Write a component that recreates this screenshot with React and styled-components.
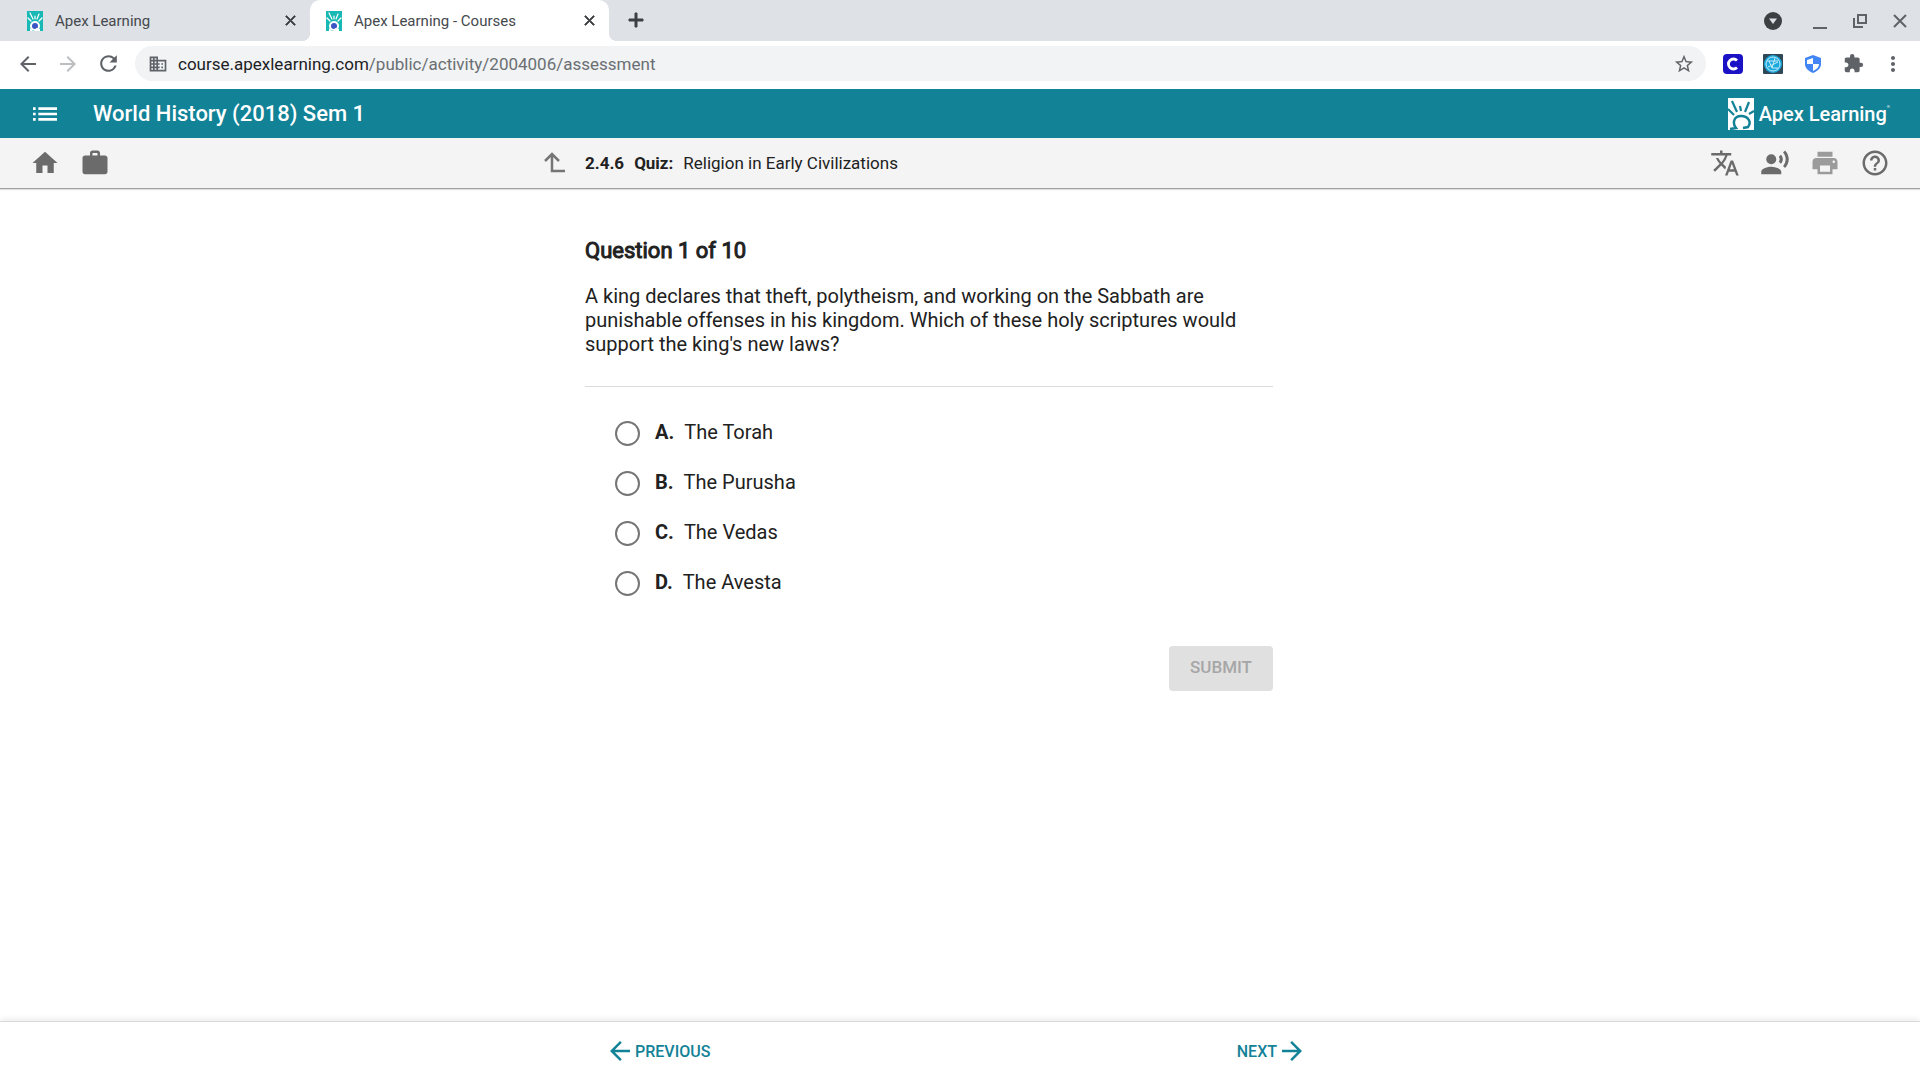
import React, { useState } from "react";
import styled, { createGlobalStyle } from "styled-components";
import {
  MdAdd,
  MdArrowBack,
  MdArrowForward,
  MdClose,
  MdDomain,
  MdExtension,
  MdHelpOutline,
  MdHome,
  MdList,
  MdMoreVert,
  MdPrint,
  MdRecordVoiceOver,
  MdRefresh,
  MdStarBorder,
  MdTranslate,
  MdWork,
} from "react-icons/md";

const GlobalStyle = createGlobalStyle`
  * {
    box-sizing: border-box;
    margin: 0;
    padding: 0;
  }

  body {
    font-family: Roboto, "Liberation Sans", sans-serif;
    color: #212121;
    background: #fff;
  }

  button {
    font: inherit;
    color: inherit;
    border: none;
    background: none;
    cursor: pointer;
  }

  a {
    color: inherit;
    text-decoration: none;
  }

  svg {
    display: block;
    flex-shrink: 0;
  }
`;

export const Page = styled.div`
  display: flex;
  flex-direction: column;
  min-height: 100vh;
`;

/* Browser window */

export const TabStrip = styled.div`
  display: flex;
  align-items: stretch;
  height: 41px;
  padding-left: 11px;
  background: #dee1e6;
`;

export const Tab = styled.div`
  position: relative;
  display: flex;
  align-items: center;
  width: 299px;
  padding: 0 11px 0 16px;
  border-radius: 10px 10px 0 0;
  background: ${(props) => (props.$active ? "#fff" : "transparent")};

  &::before,
  &::after {
    content: "";
    display: ${(props) => (props.$active ? "block" : "none")};
    position: absolute;
    bottom: 0;
    width: 8px;
    height: 8px;
  }

  &::before {
    left: -8px;
    background: radial-gradient(circle at 0 0, transparent 8px, #fff 8px);
  }

  &::after {
    right: -8px;
    background: radial-gradient(circle at 100% 0, transparent 8px, #fff 8px);
  }
`;

export const TabTitle = styled.span`
  flex: 1;
  margin-left: 12px;
  font-size: 15px;
  color: #45494d;
`;

export const ChromeButton = styled.button`
  display: flex;
  align-items: center;
  justify-content: center;
  width: ${(props) => props.$width || 40}px;
  height: 40px;
  color: ${(props) => props.$color || "#5f6368"};
`;

export const TabButton = styled(ChromeButton)`
  color: #3c4043;

  path:last-child {
    stroke: currentColor;
    stroke-width: 1px;
  }
`;

export const WindowControls = styled.div`
  display: flex;
  align-items: center;
  margin-left: auto;
`;

export const Toolbar = styled.div`
  display: flex;
  align-items: center;
  height: 48px;
  padding: 0 7px 3px 8px;
  background: #fff;
`;

export const AddressBar = styled.div`
  flex: 1;
  display: flex;
  align-items: center;
  height: 35px;
  margin: 0 7px;
  padding: 0 2px 0 13px;
  border-radius: 18px;
  background: #f1f3f4;
  color: #5f6368;
`;

export const Url = styled.a`
  flex: 1;
  margin-left: 10px;
  font-size: 17px;
  color: #6b6f73;

  span {
    color: #202124;
  }
`;

/* Course header */

export const CourseBar = styled.header`
  display: flex;
  align-items: center;
  height: 49px;
  padding: 0 30px 0 29px;
  background: #128297;
  color: #fff;
`;

export const CourseTitle = styled.h1`
  flex: 1;
  margin-left: 32px;
  font-size: 22px;
  font-weight: 500;
`;

export const Brand = styled.a`
  display: flex;
  align-items: center;
  font-size: 20px;
  font-weight: 500;

  svg {
    margin-right: 5px;
  }

  sup {
    align-self: flex-start;
    margin-top: 6px;
    font-size: 4px;
  }
`;

export const ActivityBar = styled.div`
  display: grid;
  grid-template-columns: 1fr 750px 1fr;
  align-items: center;
  height: 51px;
  border-bottom: 1px solid #a0a2a1;
  background: #f4f4f4;
  box-shadow: 0 1px 1px rgba(0, 0, 0, 0.12);
`;

export const IconGroup = styled.div`
  display: flex;
  align-items: center;
  justify-content: ${(props) => (props.$end ? "flex-end" : "flex-start")};
  gap: 20px;
  padding: 0 30px;
`;

export const IconButton = styled.button`
  display: flex;
  align-items: center;
  justify-content: center;
  color: ${(props) => (props.$faded ? "#9b9b9b" : "#6b6b6b")};
`;

export const LeftSide = styled.div`
  display: flex;
  align-items: center;
  justify-content: space-between;
  padding-right: 19px;
`;

export const ActivityTitle = styled.h2`
  display: flex;
  gap: 10px;
  font-size: 17px;
  font-weight: 400;
`;

/* Quiz */

export const Main = styled.main`
  flex: 1;
  width: 100%;
  max-width: 750px;
  margin: 0 auto;
  padding: 48px 62px 48px 0;
`;

export const QuestionTitle = styled.h3`
  font-size: 22px;
  line-height: 28px;
  font-weight: 400;
  -webkit-text-stroke: 1px currentColor;
`;

export const QuestionText = styled.p`
  margin-top: 19px;
  padding-bottom: 30px;
  border-bottom: 1px solid #dcdcdc;
  font-size: 20px;
  line-height: 24px;
`;

export const Options = styled.fieldset`
  display: flex;
  flex-direction: column;
  gap: 24px;
  padding: 33px 30px 50px;
  border: none;
`;

export const Option = styled.label`
  display: flex;
  align-items: flex-end;
  height: 26px;
  font-size: 20px;
  line-height: 28px;
  cursor: pointer;

  b {
    margin: 0 10px 0 15px;
  }
`;

export const Radio = styled.input`
  appearance: none;
  width: 25px;
  height: 25px;
  border: 2px solid #757575;
  border-radius: 50%;

  &:checked {
    border-color: #128297;
    background: radial-gradient(circle, #128297 6px, transparent 7px);
  }
`;

export const SubmitButton = styled.button`
  display: block;
  min-width: 104px;
  height: 45px;
  margin-left: auto;
  padding: 0 16px 4px;
  border-radius: 4px;
  background: #128297;
  color: #fff;
  font-size: 17px;
  font-weight: 500;

  &:disabled {
    background: #e0e0e0;
    color: #a6a6a6;
    cursor: default;
  }
`;

export const Footer = styled.footer`
  height: 59px;
  border-top: 1px solid #dadada;
  box-shadow: 0 -2px 6px rgba(0, 0, 0, 0.08);
`;

export const FooterNav = styled.nav`
  display: flex;
  align-items: center;
  justify-content: space-between;
  width: 100%;
  max-width: 750px;
  height: 100%;
  margin: 0 auto;
  padding: 0 28px 0 20px;
`;

export const NavButton = styled.button`
  display: flex;
  align-items: center;
  font-size: 16px;
  font-weight: 500;
  color: #128297;
`;

const Favicon = () => (
  <svg width="16" height="20" viewBox="0 0 16 20">
    <rect width="16" height="20" fill="#18b8b4" />
    <g stroke="#fff" strokeWidth="1.2" strokeLinecap="round">
      <path d="M1 7l3 3M3 2l3 6M8 5v3M12 3l-2 5M15 7l-3 3" />
    </g>
    <circle cx="8" cy="15" r="5" fill="#fff" />
    <path d="M3 20v-3l3 3z" fill="#fff" />
    <circle cx="8" cy="15" r="3" fill="#3b55c4" />
    <path d="M9 17l4 1v2H8z" fill="#fff" />
  </svg>
);

const BrandMark = () => (
  <svg width="26" height="32" viewBox="0 0 26 32">
    <rect width="26" height="32" fill="#fff" />
    <g stroke="#128297" strokeWidth="2.2" fill="none">
      <path d="M4 3l5 11M12 8l1 5M21 4l-4 10M0 11l6 6M26 13l-5 3" />
      <path d="M2 31l6-1c-4-5-2-12 5-12s11 6 7 11l-5 1" strokeWidth="2.5" />
    </g>
  </svg>
);

const UpLevelIcon = () => (
  <svg width="23" height="22" viewBox="0 0 23 22" fill="none" stroke="#757575" strokeWidth="2.5">
    <path d="M2 9l7-7 7 7M9 3v16h13" />
  </svg>
);

const options = [
  { id: "A", text: "The Torah" },
  { id: "B", text: "The Purusha" },
  { id: "C", text: "The Vedas" },
  { id: "D", text: "The Avesta" },
];

const App = () => {
  const [answer, setAnswer] = useState(null);

  return (
    <Page>
      <GlobalStyle />

      <TabStrip>
        <Tab>
          <Favicon />
          <TabTitle>Apex Learning</TabTitle>
          <TabButton $width={18} aria-label="Close tab">
            <MdClose size={17} />
          </TabButton>
        </Tab>
        <Tab $active>
          <Favicon />
          <TabTitle>Apex Learning - Courses</TabTitle>
          <TabButton $width={18} aria-label="Close tab">
            <MdClose size={17} />
          </TabButton>
        </Tab>
        <TabButton $width={54} aria-label="New tab">
          <MdAdd size={24} />
        </TabButton>
        <WindowControls>
          <ChromeButton $width={54} aria-label="Search tabs">
            <svg width="18" height="18" viewBox="0 0 18 18">
              <circle cx="9" cy="9" r="9" fill="#3c4043" />
              <path d="M5 6.500h8l-4 5.500z" fill="#dee1e6" />
            </svg>
          </ChromeButton>
          <ChromeButton aria-label="Minimize">
            <svg width="14" height="16" viewBox="0 0 14 16">
              <path d="M0 15h14" stroke="#5f6368" strokeWidth="2" />
            </svg>
          </ChromeButton>
          <ChromeButton aria-label="Restore">
            <svg width="14" height="14" viewBox="0 0 14 14" fill="none" stroke="#5f6368" strokeWidth="2">
              <path d="M5 1h8v8H5zM1 4v9h9" />
            </svg>
          </ChromeButton>
          <ChromeButton aria-label="Close window">
            <svg width="14" height="14" viewBox="0 0 14 14" stroke="#5f6368" strokeWidth="2">
              <path d="M1 1l12 12M13 1L1 13" />
            </svg>
          </ChromeButton>
        </WindowControls>
      </TabStrip>

      <Toolbar>
        <ChromeButton aria-label="Back">
          <MdArrowBack size={24} />
        </ChromeButton>
        <ChromeButton $color="#bcbec0" aria-label="Forward">
          <MdArrowForward size={24} />
        </ChromeButton>
        <ChromeButton aria-label="Reload">
          <MdRefresh size={25} />
        </ChromeButton>
        <AddressBar>
          <MdDomain size={20} />
          <Url href="#assessment">
            <span>course.apexlearning.com</span>/public/activity/2004006/assessment
          </Url>
          <ChromeButton aria-label="Bookmark">
            <MdStarBorder size={22} />
          </ChromeButton>
        </AddressBar>
        <ChromeButton aria-label="Clever">
          <svg width="20" height="20" viewBox="0 0 20 20">
            <rect width="20" height="20" rx="4" fill="#1a12c4" />
            <path d="M14 6.500a5 5 0 1 0 0 7" fill="none" stroke="#fff" strokeWidth="2.800" />
          </svg>
        </ChromeButton>
        <ChromeButton aria-label="Web filter">
          <svg width="20" height="20" viewBox="0 0 20 20">
            <rect width="20" height="20" rx="1" fill="#2f4858" />
            <circle cx="10" cy="10" r="9" fill="#1ba8dc" />
            <g fill="none" stroke="#c5ecfa" strokeWidth="1">
              <circle cx="10" cy="10" r="7" />
              <path d="M4 7h11M6 7l3 7h6M12 4L9 14M5 13l10-5" />
            </g>
          </svg>
        </ChromeButton>
        <ChromeButton aria-label="Security">
          <svg width="16" height="18" viewBox="0 0 16 18">
            <path d="M8 0l8 3v6c0 4-3 7-8 9-5-2-8-5-8-9V3z" fill="#4285f4" />
            <path d="M8 3v6H2V5zM8 9h6c0 3-2 5-6 7z" fill="#fff" />
          </svg>
        </ChromeButton>
        <ChromeButton aria-label="Extensions">
          <MdExtension size={21} />
        </ChromeButton>
        <ChromeButton aria-label="Menu">
          <MdMoreVert size={24} />
        </ChromeButton>
      </Toolbar>

      <CourseBar>
        <button aria-label="Course menu">
          <MdList size={32} />
        </button>
        <CourseTitle>World History (2018) Sem 1</CourseTitle>
        <Brand href="#home">
          <BrandMark />
          Apex Learning
          <sup>®</sup>
        </Brand>
      </CourseBar>

      <ActivityBar>
        <LeftSide>
          <IconGroup>
            <IconButton aria-label="Home">
              <MdHome size={30} />
            </IconButton>
            <IconButton aria-label="Portfolio">
              <MdWork size={30} />
            </IconButton>
          </IconGroup>
          <IconButton aria-label="Up one level">
            <UpLevelIcon />
          </IconButton>
        </LeftSide>
        <ActivityTitle>
          <b>2.4.6</b>
          <b>Quiz:</b>
          <span>Religion in Early Civilizations</span>
        </ActivityTitle>
        <IconGroup $end>
          <IconButton aria-label="Translate">
            <MdTranslate size={30} />
          </IconButton>
          <IconButton aria-label="Read aloud">
            <MdRecordVoiceOver size={30} />
          </IconButton>
          <IconButton $faded aria-label="Print">
            <MdPrint size={30} />
          </IconButton>
          <IconButton aria-label="Help">
            <MdHelpOutline size={30} />
          </IconButton>
        </IconGroup>
      </ActivityBar>

      <Main>
        <QuestionTitle>Question 1 of 10</QuestionTitle>
        <QuestionText>
          A king declares that theft, polytheism, and working on the Sabbath are
          punishable offenses in his kingdom. Which of these holy scriptures
          would support the king's new laws?
        </QuestionText>
        <Options>
          {options.map((option) => (
            <Option key={option.id}>
              <Radio
                type="radio"
                name="answer"
                checked={answer === option.id}
                onChange={() => setAnswer(option.id)}
              />
              <b>{option.id}.</b>
              {option.text}
            </Option>
          ))}
        </Options>
        <SubmitButton disabled={!answer}>SUBMIT</SubmitButton>
      </Main>

      <Footer>
        <FooterNav>
          <NavButton>
            <MdArrowBack size={30} />
            PREVIOUS
          </NavButton>
          <NavButton>
            NEXT
            <MdArrowForward size={30} />
          </NavButton>
        </FooterNav>
      </Footer>
    </Page>
  );
};

export default App;
